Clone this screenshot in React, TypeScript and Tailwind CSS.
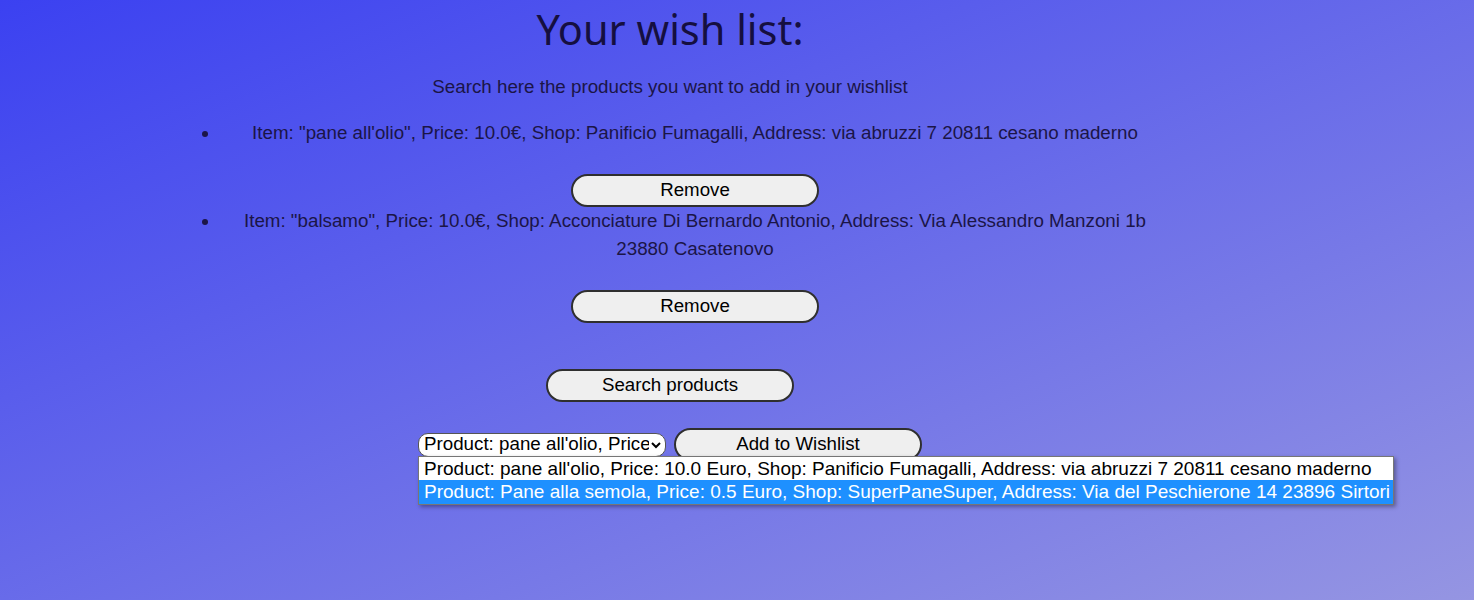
import React from "react";

const textFont = { fontFamily: '"Liberation Sans", Arial, sans-serif' };

function PillButton({ children, className = "" }: { children: React.ReactNode; className?: string }) {
  return (
    <button
      className={`w-[248px] h-[33px] rounded-full border-2 border-[#2f2f2f] bg-[#efefef] text-[18.7px] leading-none text-black ${className}`}
      style={textFont}
    >
      {children}
    </button>
  );
}

export default function App() {
  return (
    <div
      className="w-full h-[600px] overflow-hidden bg-[linear-gradient(to_bottom_right,#3b41f1,#9595e2)] text-[#1b1547]"
      style={textFont}
    >
      <div className="w-[1000px] ml-[170px] flex flex-col items-center">
        <h1
          className="mt-[4px] text-[41.5px] leading-[50px] text-[#150f40]"
          style={{ fontFamily: '"Noto Sans", "Open Sans", sans-serif' }}
        >
          Your wish list:
        </h1>
        <p className="mt-[19px] text-[18.75px] leading-[28px]">Search here the products you want to add in your wishlist</p>

        <ul className="w-full list-disc pl-[50px] mt-[18px] text-[18.75px] leading-[28px]">
          <li className="text-center">
            <p className="mb-[27px]">Item: "pane all'olio", Price: 10.0€, Shop: Panificio Fumagalli, Address: via abruzzi 7 20811 cesano maderno</p>
            <PillButton>Remove</PillButton>
          </li>
          <li className="text-center">
            <p className="mb-[27px] px-[16px]">
              Item: "balsamo", Price: 10.0€, Shop: Acconciature Di Bernardo Antonio, Address: Via Alessandro Manzoni 1b 23880 Casatenovo
            </p>
            <PillButton>Remove</PillButton>
          </li>
        </ul>

        <PillButton className="mt-[46px]">Search products</PillButton>

        <div className="mt-[26px] flex items-center gap-[8px]">
          <div className="relative">
            <div className="w-[248px] h-[24px] rounded-[10px] border border-[#555] bg-white flex items-center pl-[5px] pr-[3px] text-[18.75px] text-black">
              <span className="flex-1 overflow-hidden whitespace-nowrap leading-none">Product: pane all'olio, Price: 10.0 Euro</span>
              <svg width="12" height="12" viewBox="0 0 12 12" className="ml-[1px] shrink-0">
                <path d="M2 4 L6 8 L10 4" fill="none" stroke="#000" strokeWidth="2" />
              </svg>
            </div>
            <div className="absolute left-0 top-[23px] w-[976px] border border-[#767676] bg-white shadow-[2px_2px_4px_rgba(0,0,0,0.35)] text-[19px] leading-[24px] z-10">
              <div className="h-[23px] pl-[5px] text-black whitespace-nowrap">
                Product: pane all'olio, Price: 10.0 Euro, Shop: Panificio Fumagalli, Address: via abruzzi 7 20811 cesano maderno
              </div>
              <div className="h-[24px] pl-[5px] bg-[#1e90ff] text-white whitespace-nowrap">
                Product: Pane alla semola, Price: 0.5 Euro, Shop: SuperPaneSuper, Address: Via del Peschierone 14 23896 Sirtori
              </div>
            </div>
          </div>
          <PillButton>Add to Wishlist</PillButton>
        </div>
      </div>
    </div>
  );
}
